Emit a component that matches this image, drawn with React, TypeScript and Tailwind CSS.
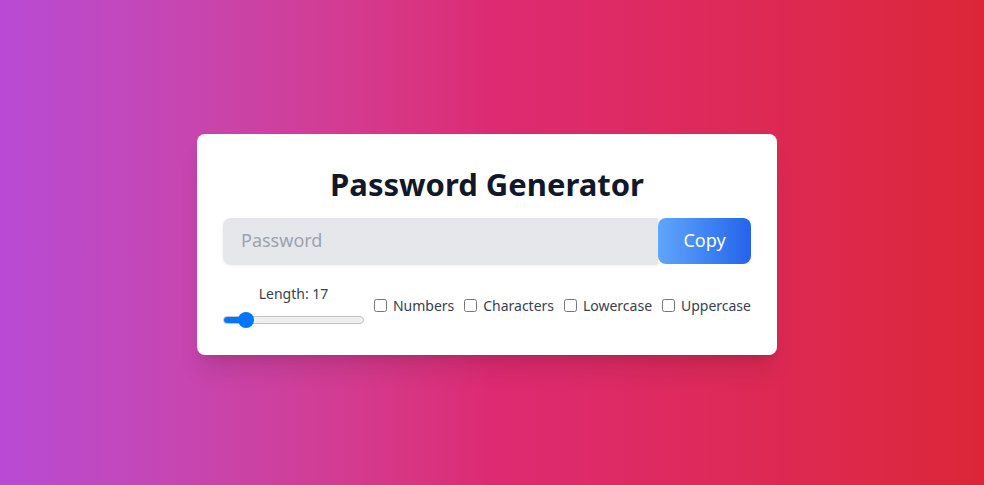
import { useState } from 'react';

const options = ['Numbers', 'Characters', 'Lowercase', 'Uppercase'];
const MIN = 6;
const MAX = 100;

export default function App() {
  const [length, setLength] = useState(17);
  const pct = ((length - MIN) / (MAX - MIN)) * 100;

  return (
    <div
      className="w-full h-[485px] flex items-center justify-center pr-[10px] pt-[3px] bg-gradient-to-r from-[#b84ad4] via-[#de2a72] to-[#dc2637]"
      style={{ fontFamily: '"Noto Sans", "Open Sans", sans-serif' }}
    >
      <div className="w-[580px] bg-white rounded-lg shadow-xl px-[26px] pt-[30px] pb-[27px]">
        <h1 className="text-center text-[31px] leading-[40px] font-bold text-[#111827] mb-[14px]">
          Password Generator
        </h1>

        {/* input + copy */}
        <div className="flex h-[46px]">
          <input
            type="text"
            readOnly
            placeholder="Password"
            className="flex-1 bg-[#e5e7eb] rounded-l-lg shadow px-[18px] text-[18px] text-gray-700 placeholder:text-[#9ca3af] focus:outline-none"
          />
          <button
            type="button"
            className="w-[93px] rounded-lg bg-gradient-to-r from-[#60a5fa] to-[#2563eb] text-white text-[18px]"
          >
            Copy
          </button>
        </div>

        {/* options */}
        <div className="flex items-center justify-between mt-[20px]">
          <div className="flex flex-col items-center w-[141px]">
            <label className="text-[14px] leading-[20px] text-[#374151] mb-[8px]">
              Length: {length}
            </label>
            <div className="h-[16px] flex items-center">
              <input
                type="range"
                min={MIN}
                max={MAX}
                value={length}
                onChange={(e) => setLength(Number(e.target.value))}
                className="w-[141px] h-[8px] m-0 appearance-none rounded-full border border-[#c4c4c4] [&::-webkit-slider-thumb]:appearance-none [&::-webkit-slider-thumb]:w-[16px] [&::-webkit-slider-thumb]:h-[16px] [&::-webkit-slider-thumb]:rounded-full [&::-webkit-slider-thumb]:bg-[#0075ff]"
                style={{
                  background: `linear-gradient(to right, #0075ff 0%, #0075ff ${pct}%, #efefef ${pct}%, #efefef 100%)`,
                }}
              />
            </div>
          </div>
          {options.map((opt) => (
            <label key={opt} className="flex items-center gap-[6px] text-[14px] text-[#374151]">
              <input type="checkbox" className="w-[13px] h-[13px]" />
              {opt}
            </label>
          ))}
        </div>
      </div>
    </div>
  );
}
